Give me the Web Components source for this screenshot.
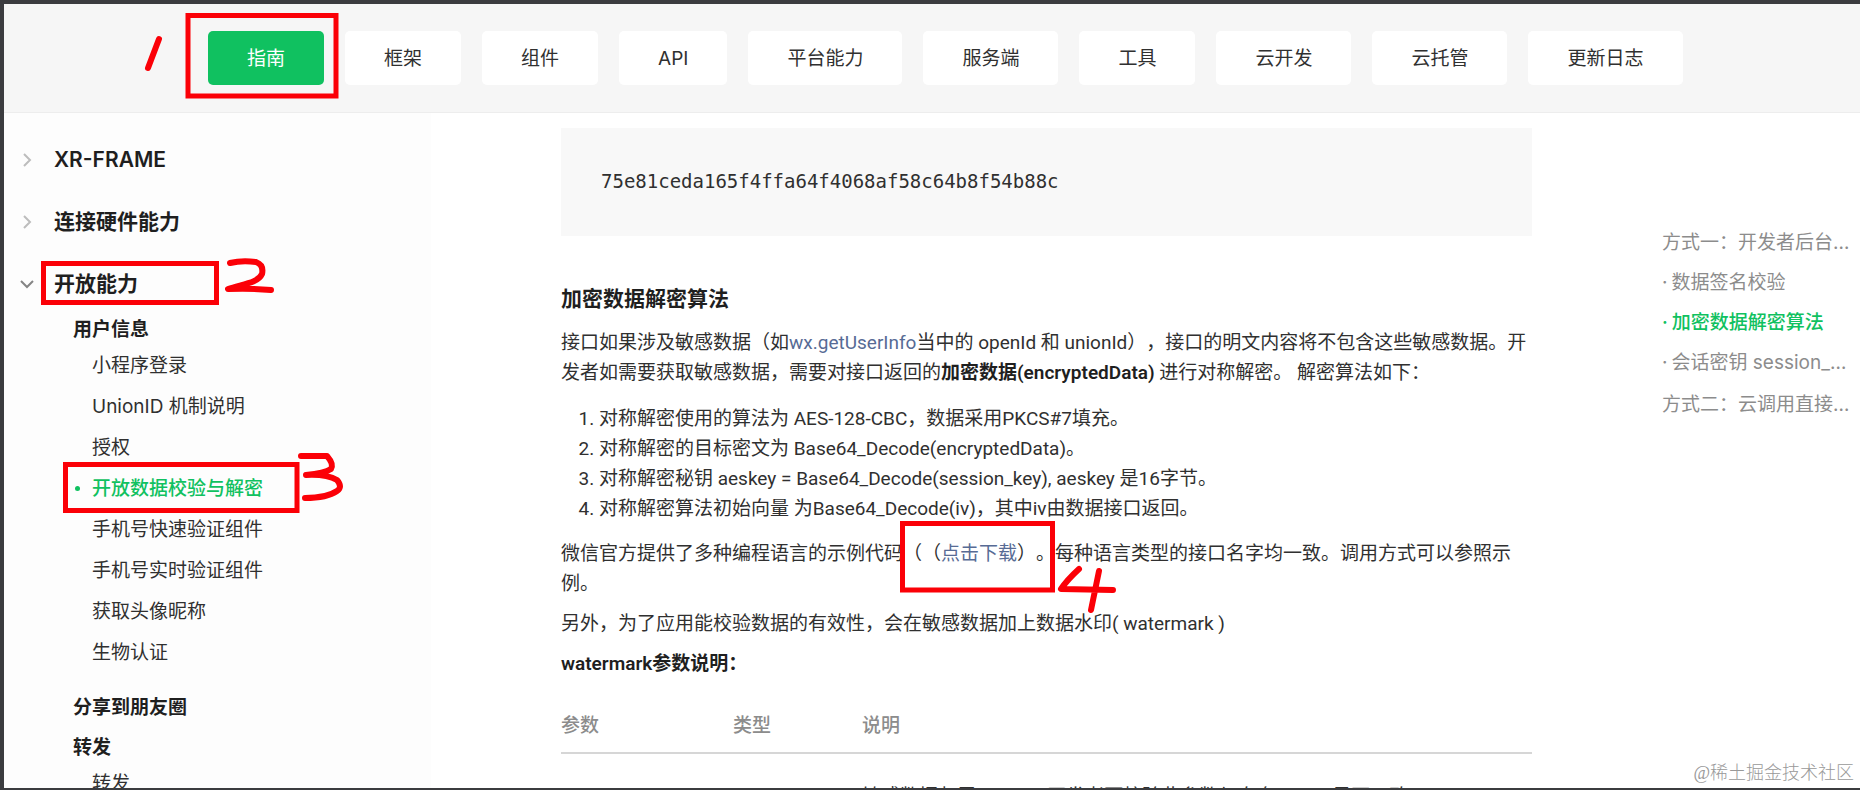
<!DOCTYPE html>
<html lang="zh-CN">
<head>
<meta charset="utf-8">
<title>开放数据校验与解密</title>
<style>
  body { margin: 0; }
</style>
</head>
<body>
<doc-page></doc-page>

<template id="doc-page">
  <style>
    :host {
      --ink: #303030; --strong: #1f1f1f; --muted: #8c8c8c; --green: #10c160; --link: #576b95; --frame: #3b3c3f;
      display: flex; flex-direction: column; box-sizing: border-box; height: 100vh; overflow: hidden; position: relative;
      border: 0 solid var(--frame); border-width: 4px 0 2px 4px; background: #fff; color: var(--ink);
      font: 19px/30px Inter, "Noto Sans CJK SC", sans-serif; text-spacing-trim: space-all;
    }
    .body { display: grid; grid-template-columns: 427px minmax(0, 1fr) 198px; flex: 1; min-height: 0; }
  </style>
  <doc-nav>
    <nav-tab active>指南</nav-tab><nav-tab>框架</nav-tab><nav-tab>组件</nav-tab><nav-tab>API</nav-tab>
    <nav-tab>平台能力</nav-tab><nav-tab>服务端</nav-tab><nav-tab>工具</nav-tab><nav-tab>云开发</nav-tab>
    <nav-tab>云托管</nav-tab><nav-tab>更新日志</nav-tab>
  </doc-nav>
  <div class="body">
    <side-menu>
      <menu-section label="XR-FRAME"></menu-section>
      <menu-section label="连接硬件能力"></menu-section>
      <menu-section label="开放能力" open>
        <menu-group label="用户信息">
          <menu-item>小程序登录</menu-item>
          <menu-item>UnionID 机制说明</menu-item>
          <menu-item>授权</menu-item>
          <menu-item active>开放数据校验与解密</menu-item>
          <menu-item>手机号快速验证组件</menu-item>
          <menu-item>手机号实时验证组件</menu-item>
          <menu-item>获取头像昵称</menu-item>
          <menu-item>生物认证</menu-item>
        </menu-group>
        <menu-group label="分享到朋友圈" single></menu-group>
        <menu-group label="转发"><menu-item>转发</menu-item></menu-group>
      </menu-section>
    </side-menu>
    <doc-article></doc-article>
    <doc-toc></doc-toc>
  </div>
  <callout-layer></callout-layer>
  <water-mark>@稀土掘金技术社区</water-mark>
</template>

<template id="doc-nav">
  <style>
    :host { display: block; flex: none; background: #f6f6f6; border-bottom: 1px solid #ededed; }
    nav { display: flex; gap: 21px; padding: 27px 0 27px 204px; }
  </style>
  <nav aria-label="主导航"><slot></slot></nav>
</template>

<template id="nav-tab">
  <style>
    :host { display: block; flex: none; }
    a { display: block; padding: 13px 39px 11px; border-radius: 5px; background: #fff; color: var(--ink); text-decoration: none; white-space: nowrap; }
    :host([active]) a { background: var(--green); color: #fff; }
  </style>
  <a href="#"><slot></slot></a>
</template>

<template id="side-menu">
  <style>
    :host { display: block; padding-top: 16px; background: #fdfdfd; min-height: 0; overflow: hidden; }
  </style>
  <nav aria-label="目录"><slot></slot></nav>
</template>

<template id="menu-section">
  <style>
    :host { display: block; }
    button { display: flex; align-items: center; gap: 19px; width: 100%; height: 62px; padding: 0 0 0 15px; border: 0; background: none;
      font: inherit; font-size: 21px; font-weight: 600; color: var(--strong); text-align: left; cursor: pointer; }
    svg { flex: none; fill: none; stroke: #bdbdbd; stroke-width: 2; }
    :host([open]) svg { transform: rotate(90deg); stroke: #858585; }
  </style>
  <button type="button"><svg width="16" height="16" viewBox="0 0 16 16"><path d="M5 2l6 6-6 6"/></svg><span></span></button>
  <div class="list"><slot></slot></div>
</template>

<template id="menu-group">
  <style>
    :host { display: block; padding-bottom: 20px; }
    :host([single]) { padding-bottom: 10px; }
    a { display: block; padding-left: 69px; font-weight: 600; color: var(--strong); text-decoration: none; }
  </style>
  <a href="#"></a>
  <slot></slot>
</template>

<template id="menu-item">
  <style>
    :host { display: block; }
    a { display: flex; align-items: center; height: 41px; color: var(--ink); text-decoration: none; }
    a::before { content: ""; flex: none; width: 5px; height: 5px; margin: 0 12px 0 71px; border-radius: 50%; }
    :host([active]) a { color: var(--green); font-weight: 500; }
    :host([active]) a::before { background: var(--green); }
  </style>
  <a href="#"><slot></slot></a>
</template>

<template id="code-block">
  <style>
    :host { display: block; background: #f8f8f8; }
    pre { margin: 0; padding: 38px 40px 40px; font: 19px/30px "DejaVu Sans Mono", monospace; }
  </style>
  <pre><slot></slot></pre>
</template>

<template id="doc-article">
  <style>
    :host { display: block; min-height: 0; padding: 15px 130px 0; font-family: Roboto, "Noto Sans CJK SC", sans-serif; }
    h3 { margin: 48px 0 14px; font-size: 21px; line-height: 30px; font-weight: 600; color: var(--strong); }
    p { margin: 0 0 10px; }
    strong { font-weight: 600; color: var(--strong); }
    a { color: var(--link); text-decoration: none; }
    ol { margin: 16px 0 15px; padding-left: 38px; }
    table { width: 100%; margin-top: 20px; border-collapse: collapse; table-layout: fixed; }
    th { padding: 12px 0 11px; border-bottom: 2px solid #d6d6d6; font-weight: 500; color: var(--muted); text-align: left; }
    td { padding: 28px 0; white-space: nowrap; }
    .name { width: 172px; }
    .type { width: 129px; }
  </style>
  <code-block>75e81ceda165f4ffa64f4068af58c64b8f54b88c</code-block>
  <h3>加密数据解密算法</h3>
  <p>接口如果涉及敏感数据（如<a href="#">wx.getUserInfo</a>当中的 openId 和 unionId），接口的明文内容将不包含这些敏感数据。开发者如需要获取敏感数据，需要对接口返回的<strong>加密数据(encryptedData)</strong> 进行对称解密。 解密算法如下：</p>
  <ol>
    <li>对称解密使用的算法为 AES-128-CBC，数据采用PKCS#7填充。</li>
    <li>对称解密的目标密文为 Base64_Decode(encryptedData)。</li>
    <li>对称解密秘钥 aeskey = Base64_Decode(session_key), aeskey 是16字节。</li>
    <li>对称解密算法初始向量 为Base64_Decode(iv)，其中iv由数据接口返回。</li>
  </ol>
  <p>微信官方提供了多种编程语言的示例代码（（<a href="#">点击下载</a>）。每种语言类型的接口名字均一致。调用方式可以参照示例。</p>
  <p>另外，为了应用能校验数据的有效性，会在敏感数据加上数据水印( watermark )</p>
  <p><strong>watermark参数说明：</strong></p>
  <table>
    <thead><tr><th class="name">参数</th><th class="type">类型</th><th>说明</th></tr></thead>
    <tbody><tr><td></td><td></td><td>敏感数据归属 appId，开发者可校验此参数与自身 appId 是否一致</td></tr></tbody>
  </table>
</template>

<template id="doc-toc">
  <style>
    :host { display: block; padding: 110px 14px 0 0; }
    ul { display: flex; flex-direction: column; margin: 0; padding: 0; list-style: none; }
    li { height: 40px; line-height: 40px; }
    li.last { margin-top: 2px; }
    a { display: flex; gap: 4px; color: var(--muted); text-decoration: none; white-space: nowrap; }
    .sub::before { content: "·"; }
    .on { color: var(--green); font-weight: 500; }
  </style>
  <nav aria-label="本页内容">
    <ul>
      <li><a href="#">方式一：开发者后台…</a></li>
      <li><a class="sub" href="#">数据签名校验</a></li>
      <li><a class="sub on" href="#">加密数据解密算法</a></li>
      <li><a class="sub" href="#">会话密钥 session_…</a></li>
      <li class="last"><a href="#">方式二：云调用直接…</a></li>
    </ul>
  </nav>
</template>

<template id="callout-layer">
  <style>
    :host { position: absolute; top: -4px; left: -4px; pointer-events: none; }
    svg { display: block; fill: none; stroke: #fb0007; stroke-width: 5; }
    .pen { stroke-width: 6; stroke-linecap: round; stroke-linejoin: round; }
  </style>
  <svg width="1130" height="630" viewBox="0 0 1130 630" aria-hidden="true">
    <path d="M188 15.500H336V96H188Z"/>
    <path d="M43.500 263.500H216.500V302.500H43.500Z"/>
    <path d="M65.500 464.500H297V510.500H65.500Z"/>
    <path d="M902.500 523.500H1052.500V590H902.500Z"/>
    <g class="pen">
      <path d="M159 39L148 68"/>
      <path d="M230 263Q242 260 256 262Q264 265 262 274C258 283 243 284 228 289Q250 288 271 290"/>
      <path d="M301 456H327Q334 464 331 469Q325 473 306 475Q327 474 337 480Q343 487 337 491Q327 498 305 498"/>
      <path d="M1079 569Q1067 580 1061 589L1113 590M1099 571L1091 610"/>
    </g>
  </svg>
</template>

<template id="water-mark">
  <style>
    :host { position: absolute; right: 6px; bottom: 0; font: 300 18px/30px "Liberation Serif", "Noto Sans CJK SC", serif; color: #999; }
  </style>
  <slot></slot>
</template>

<script>
  class TemplateElement extends HTMLElement {
    constructor() {
      super();
      const template = document.getElementById(this.localName);
      this.attachShadow({ mode: "open" }).append(template.content.cloneNode(true));
    }
  }

  class MenuSection extends TemplateElement {
    connectedCallback() {
      const button = this.shadowRoot.querySelector("button");
      button.querySelector("span").textContent = this.getAttribute("label");
      button.setAttribute("aria-expanded", this.hasAttribute("open"));
    }
  }

  class MenuGroup extends TemplateElement {
    connectedCallback() {
      this.shadowRoot.querySelector("a").textContent = this.getAttribute("label");
    }
  }

  customElements.define("menu-section", MenuSection);
  customElements.define("menu-group", MenuGroup);
  for (const name of ["nav-tab", "doc-nav", "menu-item", "side-menu", "code-block", "doc-article", "doc-toc", "callout-layer", "water-mark", "doc-page"]) {
    customElements.define(name, class extends TemplateElement {});
  }
</script>
</body>
</html>
